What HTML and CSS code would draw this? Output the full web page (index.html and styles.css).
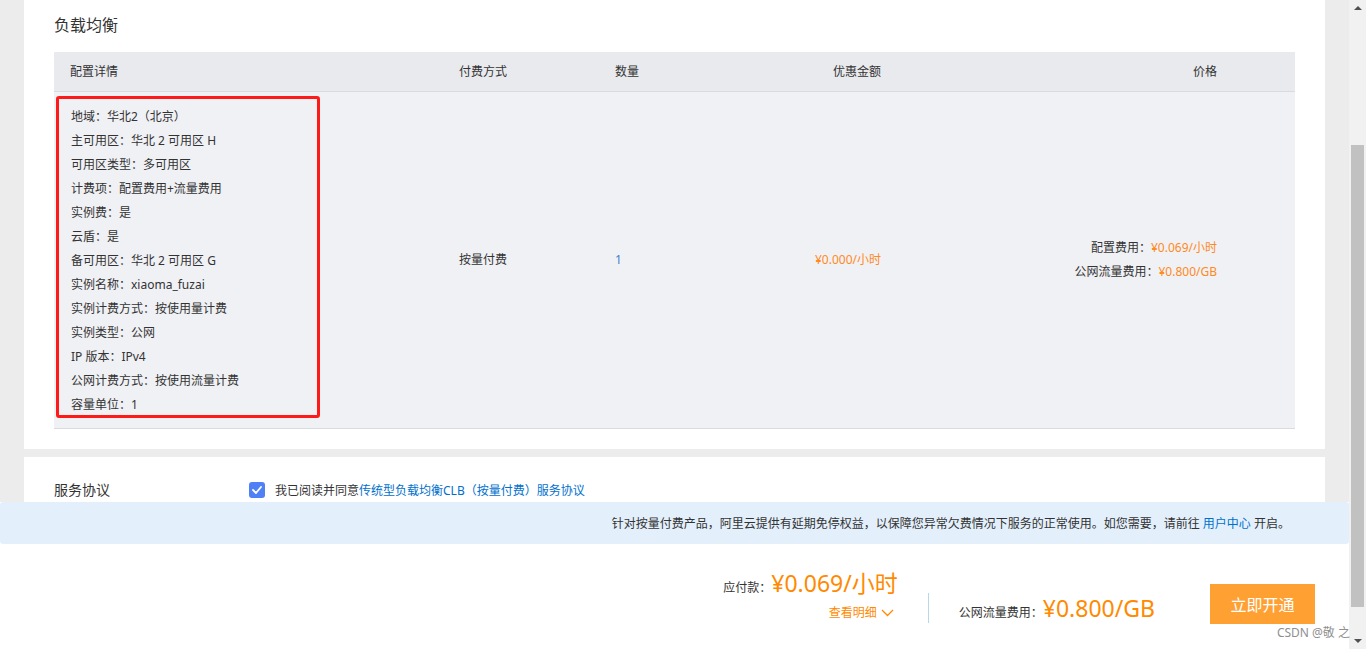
FILE: index.html
```html
<!DOCTYPE html>
<html lang="zh-CN">
<head>
<meta charset="utf-8">
<title>负载均衡 - 确认订单</title>
<link rel="stylesheet" href="styles.css">
</head>
<body>
<div class="window">
  <div class="main">
    <div class="viewport">
      <section class="card card-lb">
        <h2 class="card-title">负载均衡</h2>
        <div class="table">
          <div class="row thead">
            <div class="cell c1">配置详情</div>
            <div class="cell c2">付费方式</div>
            <div class="cell c3">数量</div>
            <div class="cell c4">优惠金额</div>
            <div class="cell c5">价格</div>
          </div>
          <div class="row tbody">
            <div class="cell c1">
              <ul class="spec">
                <li>地域：华北2（北京）</li>
                <li>主可用区：华北 2 可用区 H</li>
                <li>可用区类型：多可用区</li>
                <li>计费项：配置费用+流量费用</li>
                <li>实例费：是</li>
                <li>云盾：是</li>
                <li>备可用区：华北 2 可用区 G</li>
                <li>实例名称：xiaoma_fuzai</li>
                <li>实例计费方式：按使用量计费</li>
                <li>实例类型：公网</li>
                <li>IP 版本：IPv4</li>
                <li>公网计费方式：按使用流量计费</li>
                <li>容量单位：1</li>
              </ul>
            </div>
            <div class="cell c2">按量付费</div>
            <div class="cell c3 qty">1</div>
            <div class="cell c4 orange">¥0.000/小时</div>
            <div class="cell c5">
              <div class="price-lines">
                <div>配置费用：<span class="orange">¥0.069/小时</span></div>
                <div>公网流量费用：<span class="orange">¥0.800/GB</span></div>
              </div>
            </div>
          </div>
        </div>
      </section>
      <section class="card card-agree">
        <div class="agree-row">
          <div class="agree-label">服务协议</div>
          <label class="agree-check">
            <span class="checkbox"><svg width="10" height="8" viewBox="0 0 10 8"><path d="M1 4 L4 7 L9 1" fill="none" stroke="#fff" stroke-width="1.8" stroke-linecap="round" stroke-linejoin="round"/></svg></span>
            <span>我已阅读并同意<a class="link">传统型负载均衡CLB（按量付费）服务协议</a></span>
          </label>
        </div>
      </section>
    </div>
    <div class="notice">
      <span>针对按量付费产品，阿里云提供有延期免停权益，以保障您异常欠费情况下服务的正常使用。如您需要，请前往 <a class="link">用户中心</a> 开启。</span>
    </div>
    <div class="checkout">
      <div class="pay-group">
        <div class="pay-row">
          <span class="pay-label">应付款：</span>
          <span class="pay-price">¥0.069/小时</span>
        </div>
        <div class="detail-toggle">查看明细
          <svg width="13" height="8" viewBox="0 0 13 8"><path d="M1 1 L6.5 6.5 L12 1" fill="none" stroke="#ff8a00" stroke-width="1.3"/></svg>
        </div>
      </div>
      <div class="divider"></div>
      <div class="pay-row traffic">
        <span class="pay-label">公网流量费用：</span>
        <span class="pay-price">¥0.800/GB</span>
      </div>
      <button class="buy-btn">立即开通</button>
    </div>
  </div>
  <div class="scrollbar">
    <span class="arrow up"></span>
    <div class="track"><div class="thumb"></div></div>
    <span class="arrow down"></span>
  </div>
  <div class="watermark">CSDN @敬 之</div>
</div>
</body>
</html>
```

FILE: styles.css
```css
* { box-sizing: border-box; }
html, body { margin: 0; padding: 0; }
body {
  font-family: "Noto Sans", "Noto Sans CJK SC", sans-serif;
  color: #333;
  font-size: 12px;
  overflow: hidden;
}
.window {
  position: relative;
  display: flex;
  width: 1366px;
  height: 649px;
}
.main {
  width: 1349px;
  display: flex;
  flex-direction: column;
}
.viewport {
  height: 502px;
  overflow: hidden;
  background: #ececec;
  padding: 0 24px;
}
.card {
  background: #fff;
  padding: 0 30px;
}
.card-lb {
  padding-top: 13px;
  padding-bottom: 20px;
}
.card-title {
  margin: 0 0 15px;
  font-size: 16px;
  line-height: 24px;
  font-weight: 400;
  color: #333;
}
.row {
  display: grid;
  grid-template-columns: 389px 156px 100px 198px 1fr;
}
.thead {
  height: 40px;
  background: #e9eaee;
  border-bottom: 1px solid #dadbdf;
  align-items: center;
}
.cell { padding: 0 16px; line-height: 18px; }
.c4 { text-align: right; }
.c5 { text-align: right; padding-right: 78px; }
.tbody {
  background: #f0f1f5;
  border-bottom: 1px solid #dadbdf;
  align-items: center;
}
.tbody .c1 { padding: 4px 2px 10px; }
.spec {
  list-style: none;
  margin: 0;
  padding: 6px 12px 0;
  border: 3px solid #ff1a1a;
  border-radius: 3px;
  width: 264px;
  height: 322px;
}
.spec li { line-height: 24px; white-space: nowrap; }
.qty { color: #3f7fcf; }
.orange { color: #ff8a1e; }
.price-lines div { line-height: 24px; }
.card-agree {
  margin-top: 8px;
  padding-top: 23px;
  height: 60px;
}
.agree-row {
  display: flex;
  align-items: center;
  height: 20px;
}
.agree-label {
  width: 195px;
  font-size: 14px;
  line-height: 20px;
}
.agree-check {
  display: flex;
  align-items: center;
  gap: 10px;
  font-size: 12px;
}
.checkbox {
  width: 16px;
  height: 16px;
  border-radius: 3px;
  background: #4f80f6;
  display: flex;
  align-items: center;
  justify-content: center;
}
.link { color: #0070cc; text-decoration: none; }
.notice {
  height: 42px;
  background: #e3f0fc;
  border-radius: 3px;
  display: flex;
  align-items: center;
  justify-content: flex-end;
  padding-right: 59px;
  font-size: 12px;
}
.checkout {
  flex: 1;
  background: #fff;
  display: flex;
  justify-content: flex-end;
  align-items: flex-start;
  padding-right: 34px;
}
.pay-group {
  margin-top: 25px;
  display: flex;
  flex-direction: column;
  align-items: flex-end;
}
.pay-row {
  display: flex;
  align-items: baseline;
  height: 28px;
}
.pay-label { font-size: 12px; color: #333; }
.pay-price {
  font-size: 23px;
  line-height: 28px;
  color: #ff8a00;
}
.detail-toggle {
  margin-top: 7px;
  margin-right: 4px;
  color: #ff8a00;
  font-size: 12px;
  line-height: 18px;
  display: flex;
  align-items: center;
  gap: 4px;
}
.divider {
  width: 1px;
  height: 30px;
  background: #b9d6ef;
  margin: 49px 30px 0;
}
.traffic { margin-top: 50px; }
.buy-btn {
  margin-top: 40px;
  margin-left: 55px;
  width: 105px;
  height: 40px;
  border: 0;
  background: #ffa033;
  color: #fff;
  font-family: inherit;
  font-size: 16px;
  padding: 0;
}
.scrollbar {
  width: 17px;
  background: #f1f1f1;
  display: flex;
  flex-direction: column;
  align-items: center;
}
.arrow {
  width: 0;
  height: 0;
  border-left: 4px solid transparent;
  border-right: 4px solid transparent;
  margin: 6px 0;
}
.arrow.up { border-bottom: 4px solid #505050; }
.arrow.down { border-top: 4px solid #505050; }
.track { flex: 1; width: 100%; padding: 129px 2px 26px; }
.thumb { height: 100%; background: #c1c1c1; }
.watermark {
  position: absolute;
  right: 16px;
  top: 624px;
  font-size: 12px;
  color: #8f8f8f;
  line-height: 18px;
}
```
